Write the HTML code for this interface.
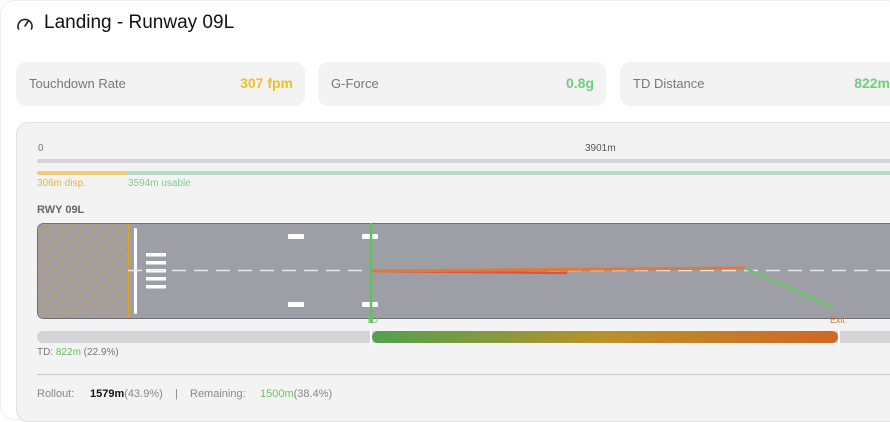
<!DOCTYPE html><html><head><style>
*{margin:0;padding:0;box-sizing:border-box}
body{width:890px;height:411px;overflow:hidden;background:#fff;font-family:"Liberation Sans",sans-serif;position:relative}
.a{position:absolute;white-space:nowrap}
.card{position:absolute;top:62px;height:44px;background:#f3f3f3;border-radius:10px;font-size:13px;color:#777}
.card .l{position:absolute;left:13px;top:14px}
.card .v{position:absolute;right:12px;top:13px;font-size:14px;font-weight:bold}
</style></head><body>
<div class="a" style="left:0;top:0;width:900px;height:420px;border:1px solid #eee;border-radius:14px"></div>
<svg class="a" style="left:16px;top:15px" width="18" height="18" viewBox="0 0 18 18"><path d="M2.5 14 A7 7 0 1 1 15.5 14" fill="none" stroke="#222" stroke-width="1.6" stroke-linecap="round"/><path d="M9 11 L12 6.5" stroke="#222" stroke-width="1.6" stroke-linecap="round"/></svg>
<div class="a" style="left:44px;top:12px;font-size:19px;color:#111">Landing - Runway 09L</div>
<div class="card" style="left:16px;width:289px"><span class="l">Touchdown Rate</span><span class="v" style="color:#f0c020">307 fpm</span></div>
<div class="card" style="left:318px;width:288px"><span class="l">G-Force</span><span class="v" style="color:#6dd07a">0.8g</span></div>
<div class="card" style="left:620px;width:290px"><span class="l">TD Distance</span><span class="v" style="color:#6dd07a;right:20px">822m</span></div>
<div class="a" style="left:16px;top:122px;width:900px;height:300px;background:#f3f3f3;border:1px solid #e2e2e2;border-radius:12px"></div>
<div class="a" style="left:38px;top:143px;font-size:10px;color:#777">0</div>
<div class="a" style="left:585px;top:143px;font-size:10px;color:#555">3901m</div>
<div class="a" style="left:37px;top:159px;width:860px;height:4px;background:#d3d3d8;border-radius:2px"></div>
<div class="a" style="left:37px;top:171px;width:91px;height:4px;background:#f0cc78;border-radius:2px 0 0 2px"></div>
<div class="a" style="left:128px;top:171px;width:770px;height:4px;background:#b5dcc4"></div>
<div class="a" style="left:37px;top:178px;font-size:10px;color:#e9b43a">306m disp.</div>
<div class="a" style="left:128px;top:178px;font-size:10px;color:#7fcb96">3594m usable</div>
<div class="a" style="left:37px;top:204px;font-size:11px;font-weight:bold;color:#666">RWY 09L</div>
<svg class="a" style="left:37px;top:223px" width="860" height="104">
<defs><pattern id="h" width="9" height="9" patternUnits="userSpaceOnUse" patternTransform="rotate(45)"><rect width="9" height="9" fill="#a29fa3"/><rect width="1.6" height="9" fill="#b8986e"/></pattern></defs>
<rect x="0.5" y="0.5" width="870" height="95" rx="6" fill="#9e9ea7" stroke="#6f6f78"/>
<path d="M1 7 Q1 1 7 1 L91 1 L91 95 L7 95 Q1 95 1 89Z" fill="url(#h)"/>
<line x1="91.5" y1="1" x2="91.5" y2="95" stroke="#e0a020" stroke-width="1.5"/>
<rect x="97" y="5" width="3" height="86" rx="1.5" fill="#fff"/>
<g fill="#fff"><rect x="109" y="30" width="20" height="3.5"/><rect x="109" y="38" width="20" height="3.5"/><rect x="109" y="46" width="20" height="3.5"/><rect x="109" y="54" width="20" height="3.5"/><rect x="109" y="62" width="20" height="3.5"/>
<rect x="251" y="11" width="16" height="5" rx="1"/><rect x="251" y="79" width="16" height="5" rx="1"/><rect x="325" y="11" width="16" height="5" rx="1"/><rect x="325" y="79" width="16" height="5" rx="1"/></g>
<line x1="91" y1="47.5" x2="860" y2="47.5" stroke="#e8e8ec" stroke-width="1.5" stroke-dasharray="14 8"/>
<line x1="334" y1="48" x2="530" y2="50" stroke="#dd5540" stroke-width="2.5"/>
<line x1="334" y1="48" x2="708" y2="45" stroke="#e07a3a" stroke-width="3"/>
<line x1="708" y1="45" x2="797" y2="85" stroke="#6cc46a" stroke-width="2.5"/>
<line x1="334" y1="0" x2="334" y2="100" stroke="#5cc45a" stroke-width="2.5"/>
</svg>
<div class="a" style="left:366px;top:315px;font-size:9px;color:#6cc46a">TD</div>
<div class="a" style="left:830px;top:315px;font-size:9px;color:#e07a20">Exit</div>
<div class="a" style="left:37px;top:331px;width:860px;height:12px;background:#d3d3d8;border-radius:6px"></div>
<div class="a" style="left:372px;top:331px;width:466px;height:12px;border-radius:6px;background:linear-gradient(90deg,#53a050,#b8922a 50%,#d46624)"></div>
<div class="a" style="left:370px;top:329px;width:2px;height:16px;background:#fff"></div>
<div class="a" style="left:838px;top:329px;width:2px;height:16px;background:#fff"></div>
<div class="a" style="left:37px;top:347px;font-size:10px;color:#777">TD: <span style="color:#5cc45a">822m</span> (22.9%)</div>
<div class="a" style="left:37px;top:374px;width:860px;height:1px;background:#c8c8c8"></div>
<div class="a" style="left:37px;top:388px;font-size:11px;color:#888">Rollout:</div>
<div class="a" style="left:90px;top:388px;font-size:11px;color:#888"><b style="color:#111">1579m</b>(43.9%)</div>
<div class="a" style="left:175px;top:388px;font-size:11px;color:#888">|</div>
<div class="a" style="left:190px;top:388px;font-size:11px;color:#888">Remaining:</div>
<div class="a" style="left:260px;top:388px;font-size:11px;color:#888"><span style="color:#6cc46a">1500m</span>(38.4%)</div>
</body></html>
